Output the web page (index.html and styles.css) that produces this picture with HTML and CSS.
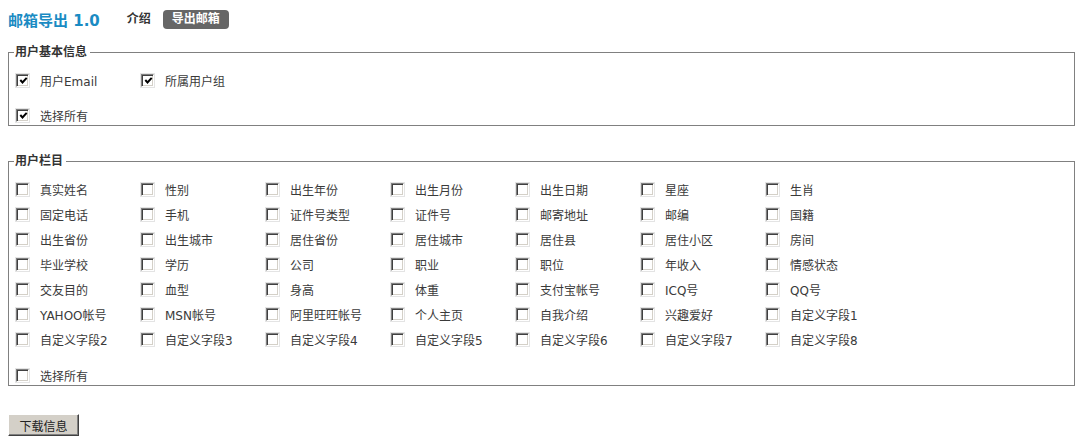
FILE: index.html
```html
<!DOCTYPE html>
<html lang="zh-CN">
<head>
<meta charset="utf-8">
<title>邮箱导出</title>
<link rel="stylesheet" href="styles.css">
</head>
<body>
<div class="header">
  <span class="title">邮箱导出 1.0</span>
  <span class="tab">介绍</span>
  <span class="tab active">导出邮箱</span>
</div>

<fieldset class="group basic">
  <legend>用户基本信息</legend>
  <div class="grid">
    <label class="item"><span class="cb"><svg viewBox="0 0 9 9" width="9" height="9"><path d="M1.3 4 L3.5 6.4 L7.7 1.8" fill="none" stroke="#000" stroke-width="2"/></svg></span>用户Email</label>
    <label class="item"><span class="cb"><svg viewBox="0 0 9 9" width="9" height="9"><path d="M1.3 4 L3.5 6.4 L7.7 1.8" fill="none" stroke="#000" stroke-width="2"/></svg></span>所属用户组</label>
  </div>
  <div class="all basic-all">
    <label class="item"><span class="cb"><svg viewBox="0 0 9 9" width="9" height="9"><path d="M1.3 4 L3.5 6.4 L7.7 1.8" fill="none" stroke="#000" stroke-width="2"/></svg></span>选择所有</label>
  </div>
</fieldset>

<fieldset class="group fields">
  <legend>用户栏目</legend>
  <div class="grid">
    <label class="item"><span class="cb"></span>真实姓名</label>
    <label class="item"><span class="cb"></span>性别</label>
    <label class="item"><span class="cb"></span>出生年份</label>
    <label class="item"><span class="cb"></span>出生月份</label>
    <label class="item"><span class="cb"></span>出生日期</label>
    <label class="item"><span class="cb"></span>星座</label>
    <label class="item"><span class="cb"></span>生肖</label>

    <label class="item"><span class="cb"></span>固定电话</label>
    <label class="item"><span class="cb"></span>手机</label>
    <label class="item"><span class="cb"></span>证件号类型</label>
    <label class="item"><span class="cb"></span>证件号</label>
    <label class="item"><span class="cb"></span>邮寄地址</label>
    <label class="item"><span class="cb"></span>邮编</label>
    <label class="item"><span class="cb"></span>国籍</label>

    <label class="item"><span class="cb"></span>出生省份</label>
    <label class="item"><span class="cb"></span>出生城市</label>
    <label class="item"><span class="cb"></span>居住省份</label>
    <label class="item"><span class="cb"></span>居住城市</label>
    <label class="item"><span class="cb"></span>居住县</label>
    <label class="item"><span class="cb"></span>居住小区</label>
    <label class="item"><span class="cb"></span>房间</label>

    <label class="item"><span class="cb"></span>毕业学校</label>
    <label class="item"><span class="cb"></span>学历</label>
    <label class="item"><span class="cb"></span>公司</label>
    <label class="item"><span class="cb"></span>职业</label>
    <label class="item"><span class="cb"></span>职位</label>
    <label class="item"><span class="cb"></span>年收入</label>
    <label class="item"><span class="cb"></span>情感状态</label>

    <label class="item"><span class="cb"></span>交友目的</label>
    <label class="item"><span class="cb"></span>血型</label>
    <label class="item"><span class="cb"></span>身高</label>
    <label class="item"><span class="cb"></span>体重</label>
    <label class="item"><span class="cb"></span>支付宝帐号</label>
    <label class="item"><span class="cb"></span>ICQ号</label>
    <label class="item"><span class="cb"></span>QQ号</label>

    <label class="item"><span class="cb"></span>YAHOO帐号</label>
    <label class="item"><span class="cb"></span>MSN帐号</label>
    <label class="item"><span class="cb"></span>阿里旺旺帐号</label>
    <label class="item"><span class="cb"></span>个人主页</label>
    <label class="item"><span class="cb"></span>自我介绍</label>
    <label class="item"><span class="cb"></span>兴趣爱好</label>
    <label class="item"><span class="cb"></span>自定义字段1</label>

    <label class="item"><span class="cb"></span>自定义字段2</label>
    <label class="item"><span class="cb"></span>自定义字段3</label>
    <label class="item"><span class="cb"></span>自定义字段4</label>
    <label class="item"><span class="cb"></span>自定义字段5</label>
    <label class="item"><span class="cb"></span>自定义字段6</label>
    <label class="item"><span class="cb"></span>自定义字段7</label>
    <label class="item"><span class="cb"></span>自定义字段8</label>
  </div>
  <div class="all fields-all">
    <label class="item"><span class="cb"></span>选择所有</label>
  </div>
</fieldset>

<div class="actions">
  <button class="btn" type="button">下载信息</button>
</div>
</body>
</html>
```

FILE: styles.css
```css
html, body {
  background: #fff;
}
body {
  margin: 8px;
  font-family: "DejaVu Sans", "Noto Sans CJK SC", sans-serif;
  font-size: 12px;
  color: #3a3a3a;
}
.header {
  display: flex;
  align-items: center;
  height: 22px;
}
.title {
  font-size: 15px;
  font-weight: bold;
  color: #1a8bc3;
  margin-right: 27px;
}
.tab {
  font-weight: bold;
  color: #333;
  margin-right: 12px;
  line-height: 19px;
}
.tab.active {
  background: #666;
  color: #fff;
  border-radius: 4px;
  padding: 0 9px;
  height: 19px;
}
.group {
  margin: 0;
  border: 1px solid #808080;
  padding: 10px 0 0 7px;
  min-width: 0;
}
.group legend {
  font-weight: bold;
  color: #333;
  padding: 0 3px 0 1px;
  margin-left: -2px;
  line-height: 16px;
}
.basic {
  margin-top: 14px;
}
.fields {
  margin-top: 27px;
  padding-bottom: 0;
}
.grid {
  display: grid;
  grid-template-columns: repeat(7, 125px);
  row-gap: 5px;
}
.item {
  display: flex;
  align-items: center;
  height: 20px;
  white-space: nowrap;
}
.cb {
  box-sizing: border-box;
  width: 13px;
  height: 13px;
  margin-right: 11px;
  flex: none;
  background: #fff;
  border: 1px solid;
  border-color: #808080 #fff #fff #808080;
  box-shadow: inset 1px 1px 0 #404040, inset -1px -1px 0 #d4d0c8, 0 0 0 1px #e4e4e4;
  display: flex;
  align-items: center;
  justify-content: center;
}
.cb svg {
  display: block;
  margin: 1px 0 0 1px;
}
.basic-all {
  margin-top: 15px;
}
.fields-all {
  margin-top: 16px;
}
.actions {
  margin-top: 28px;
}
.btn {
  width: 71px;
  height: 22px;
  margin: 0;
  padding: 0;
  font-family: "DejaVu Sans", "Noto Sans CJK SC", sans-serif;
  font-size: 12px;
  color: #222;
  background: #d4d0c8;
  border: 1px solid;
  border-color: #fff #404040 #404040 #fff;
  box-shadow: inset -1px -1px 0 #808080;
}
```
